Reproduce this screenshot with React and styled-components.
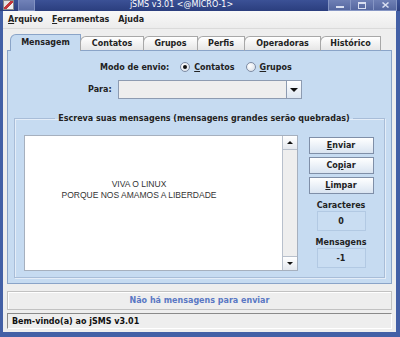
import React from "react";
import styled, { createGlobalStyle } from "styled-components";

const GlobalStyle = createGlobalStyle`
  html, body { margin: 0; padding: 0; background: #eeeeee; }
  body { font-family: "DejaVu Sans", sans-serif; }
  * { box-sizing: border-box; }
`;

const Window = styled.div`
  width: 400px;
  height: 337px;
  display: flex;
  flex-direction: column;
  overflow: hidden;
`;

const TitleBar = styled.div`
  height: 11px;
  flex: none;
  display: flex;
  align-items: stretch;
  background: linear-gradient(#3b5196, #2b3e7e);
  color: #ffffff;
`;

const AppIcon = styled.div`
  width: 11px;
  height: 10px;
  margin-left: 3px;
  background: linear-gradient(135deg, #e2e2e2 0 40%, #c4363a 40% 60%, #f0f0f0 60%);
  border: 1px solid #8a8a8a;
`;

const MenuButton = styled.div`
  width: 17px;
  margin-left: 4px;
  background: linear-gradient(#7182b8, #5a6ca4);
  border: 1px solid #8292c2;
  border-top: none;
`;

const Title = styled.div`
  flex: 1;
  text-align: center;
  font-size: 8px;
  line-height: 10px;
  white-space: nowrap;
`;

const WinButtons = styled.div`
  display: flex;
  margin-right: 3px;
`;

const WinButton = styled.div`
  width: 23px;
  display: flex;
  align-items: center;
  justify-content: center;
  background: linear-gradient(#6f80b5, #55679f);
  border: 1px solid #8696c4;
  border-top: none;
  & + & { border-left: none; }
`;

const Body = styled.div`
  flex: 1;
  display: flex;
  flex-direction: column;
  border-left: 3px solid #4360a6;
  border-right: 4px solid #4360a6;
  border-bottom: 5px solid #4360a6;
  background: #eeeeee;
`;

const MenuBar = styled.div`
  height: 18px;
  flex: none;
  display: flex;
  align-items: center;
  gap: 9px;
  padding-left: 5px;
  background: linear-gradient(#f8f8f8, #ececec);
  border-bottom: 1px solid #dadada;
`;

const MenuItem = styled.span`
  font-size: 8px;
  font-weight: bold;
  color: #222222;
`;

const Mn = styled.span`
  text-decoration: underline;
`;

const Content = styled.div`
  display: flex;
  flex-direction: column;
  padding: 5px 4px 0 4px;
`;

const TabStrip = styled.div`
  height: 17px;
  margin-bottom: -1px;
  padding-left: 3px;
  display: flex;
  align-items: flex-end;
  position: relative;
  z-index: 1;
`;

const Tab = styled.div`
  width: ${p => p.$w}px;
  height: ${p => (p.$active ? 17 : 15)}px;
  display: flex;
  align-items: center;
  justify-content: center;
  padding-bottom: ${p => (p.$active ? 2 : 0)}px;
  font-size: 8px;
  font-weight: bold;
  color: #222222;
  border: 1px solid ${p => (p.$active ? "#8aa4c8" : "#a8a8a8")};
  border-bottom: ${p => (p.$active ? "none" : "1px solid #8aa4c8")};
  border-top-left-radius: 6px;
  background: ${p => (p.$active ? "#c6dbf1" : "linear-gradient(#ffffff, #e6e6e6)")};
  & + & { margin-left: -1px; }
`;

const Panel = styled.div`
  height: 234px;
  display: flex;
  flex-direction: column;
  background: #c6dbf1;
  border: 1px solid #8aa4c8;
`;

const Label = styled.span`
  font-size: 8px;
  font-weight: bold;
  color: #222222;
  white-space: nowrap;
`;

const ModeRow = styled.div`
  height: 14px;
  margin-top: 9px;
  padding-left: 92px;
  display: flex;
  align-items: center;
`;

const Radio = styled.span`
  width: 10px;
  height: 10px;
  margin: 0 4px 0 ${p => p.$gap}px;
  border-radius: 50%;
  border: 1px solid #7e8ca4;
  background: radial-gradient(circle at 35% 35%, #ffffff, #d4dbe6);
  display: flex;
  align-items: center;
  justify-content: center;
  &::after {
    content: "";
    width: 4px;
    height: 4px;
    border-radius: 50%;
    background: ${p => (p.$checked ? "#111111" : "transparent")};
  }
`;

const ParaRow = styled.div`
  height: 19px;
  margin-top: 6px;
  padding-left: 80px;
  display: flex;
  align-items: center;
  gap: 6px;
`;

const Combo = styled.div`
  width: 184px;
  height: 19px;
  display: flex;
  border: 1px solid #8d9bb1;
`;

const ComboField = styled.div`
  flex: 1;
  background: #eeeeee;
`;

const ArrowButton = styled.div`
  width: 15px;
  display: flex;
  align-items: center;
  justify-content: center;
  border-left: 1px solid #8d9bb1;
  background: linear-gradient(#ffffff, #dde6f1);
`;

const Triangle = styled.span`
  width: 0;
  height: 0;
  border-left: ${p => p.$s}px solid transparent;
  border-right: ${p => p.$s}px solid transparent;
  border-${p => (p.$up ? "bottom" : "top")}: ${p => p.$s}px solid #111111;
`;

const GroupBox = styled.fieldset`
  margin: 14px 6px 0 6px;
  height: 165px;
  padding: 0 0 7px 9px;
  border: 1px solid #a8bdd8;
  box-shadow: inset 1px 1px 0 #e4edf8, 1px 1px 0 #e4edf8;
  display: flex;
`;

const Legend = styled.legend`
  margin: 0 auto;
  padding: 0 3px;
  font-size: 8px;
  line-height: 11px;
  font-weight: bold;
  color: #222222;
`;

const GroupInner = styled.div`
  flex: 1;
  display: flex;
  padding-top: 11px;
`;

const ScrollPane = styled.div`
  width: 274px;
  height: 136px;
  display: flex;
  border: 1px solid #a6b0be;
  background: #ffffff;
`;

const TextArea = styled.div`
  flex: 1;
  padding: 43px 29px 0 0;
  text-align: center;
  font-family: "Liberation Sans", Arial, sans-serif;
  font-size: 8.5px;
  line-height: 11px;
  color: #333333;
  white-space: pre;
`;

const ScrollBar = styled.div`
  width: 15px;
  display: flex;
  flex-direction: column;
  justify-content: space-between;
  background: #eeeeee;
  border-left: 1px solid #b8c0cc;
`;

const ScrollArrow = styled.div`
  height: 14px;
  display: flex;
  align-items: center;
  justify-content: center;
  background: linear-gradient(#ffffff, #e4e8ee);
  border-${p => (p.$up ? "bottom" : "top")}: 1px solid #b8c0cc;
`;

const SideColumn = styled.div`
  flex: 1;
  display: flex;
  flex-direction: column;
  align-items: center;
  padding-top: 2px;
`;

const Button = styled.button`
  width: 65px;
  height: 17px;
  margin: 0 0 3px 0;
  padding: 0;
  font-family: "DejaVu Sans", sans-serif;
  font-size: 8px;
  font-weight: bold;
  color: #222222;
  border: 1px solid #7f8fa8;
  background: linear-gradient(#ffffff, #d9e4f1);
`;

const CounterLabel = styled(Label)`
  margin-top: ${p => p.$top}px;
  line-height: 11px;
`;

const CounterBox = styled.div`
  width: 49px;
  height: 20px;
  display: flex;
  align-items: center;
  justify-content: center;
  font-size: 8px;
  font-weight: bold;
  color: #222222;
  background: #c9ddf2;
  border: 1px solid #b2c9e3;
`;

const StatusMessage = styled.div`
  height: 19px;
  margin-top: 7px;
  display: flex;
  align-items: center;
  justify-content: center;
  font-size: 8px;
  font-weight: bold;
  color: #5a78c4;
  background: #eeeeee;
  border: 1px solid #c2c2c2;
  box-shadow: inset 1px 1px 0 #ffffff;
`;

const StatusBar = styled.div`
  height: 16px;
  margin-top: 3px;
  display: flex;
  align-items: center;
  padding-left: 4px;
  font-size: 8px;
  font-weight: bold;
  color: #111111;
  border: 1px solid;
  border-color: #8a8a8a #ffffff #ffffff #8a8a8a;
`;

const tabs = [
  ["Mensagem", 71],
  ["Contatos", 64],
  ["Grupos", 55],
  ["Perfis", 48],
  ["Operadoras", 77],
  ["Histórico", 61]
];

export default function App() {
  return (
    <Window>
      <GlobalStyle />
      <TitleBar>
        <AppIcon />
        <MenuButton />
        <Title>jSMS v3.01 &lt;@MICRO-1&gt;</Title>
        <WinButtons>
          <WinButton>
            <svg width="8" height="6" viewBox="0 0 8 6"><rect x="0" y="4" width="8" height="2" fill="#d8def0" /></svg>
          </WinButton>
          <WinButton>
            <svg width="8" height="7" viewBox="0 0 8 7"><rect x="0.5" y="0.5" width="7" height="6" fill="none" stroke="#d8def0" /><rect x="0" y="0" width="8" height="2" fill="#d8def0" /></svg>
          </WinButton>
          <WinButton>
            <svg width="7" height="6" viewBox="0 0 7 6"><path d="M0.5 0.5 L6.5 5.5 M6.5 0.5 L0.5 5.5" stroke="#d8def0" strokeWidth="1.5" /></svg>
          </WinButton>
        </WinButtons>
      </TitleBar>
      <Body>
        <MenuBar>
          <MenuItem><Mn>A</Mn>rquivo</MenuItem>
          <MenuItem><Mn>F</Mn>erramentas</MenuItem>
          <MenuItem>A<Mn>j</Mn>uda</MenuItem>
        </MenuBar>
        <Content>
          <TabStrip>
            {tabs.map(([name, w], i) => (
              <Tab key={name} $w={w} $active={i === 0}>{name}</Tab>
            ))}
          </TabStrip>
          <Panel>
            <ModeRow>
              <Label>Modo de envio:</Label>
              <Radio $checked $gap={11} />
              <Label><Mn>C</Mn>ontatos</Label>
              <Radio $gap={11} />
              <Label><Mn>G</Mn>rupos</Label>
            </ModeRow>
            <ParaRow>
              <Label>Para:</Label>
              <Combo>
                <ComboField />
                <ArrowButton><Triangle $s={4} /></ArrowButton>
              </Combo>
            </ParaRow>
            <GroupBox>
              <Legend>Escreva suas mensagens (mensagens grandes serão quebradas)</Legend>
              <GroupInner>
                <ScrollPane>
                  <TextArea>{"VIVA O LINUX\nPORQUE NOS AMAMOS A LIBERDADE"}</TextArea>
                  <ScrollBar>
                    <ScrollArrow $up><Triangle $up $s={3} /></ScrollArrow>
                    <ScrollArrow><Triangle $s={3} /></ScrollArrow>
                  </ScrollBar>
                </ScrollPane>
                <SideColumn>
                  <Button><Mn>E</Mn>nviar</Button>
                  <Button>Co<Mn>p</Mn>iar</Button>
                  <Button><Mn>L</Mn>impar</Button>
                  <CounterLabel $top={3}>Caracteres</CounterLabel>
                  <CounterBox>0</CounterBox>
                  <CounterLabel $top={6}>Mensagens</CounterLabel>
                  <CounterBox>-1</CounterBox>
                </SideColumn>
              </GroupInner>
            </GroupBox>
          </Panel>
          <StatusMessage>Não há mensagens para enviar</StatusMessage>
          <StatusBar>Bem-vindo(a) ao jSMS v3.01</StatusBar>
        </Content>
      </Body>
    </Window>
  );
}
